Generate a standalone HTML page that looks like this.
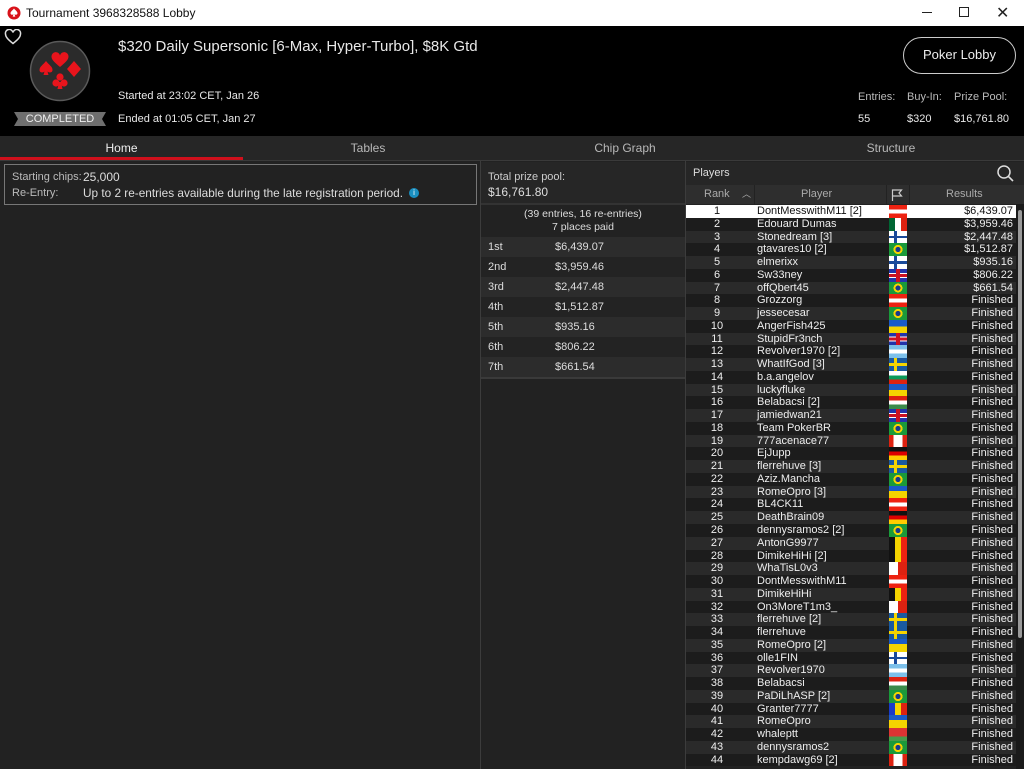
<!DOCTYPE html>
<html><head><meta charset="utf-8"><style>
*{margin:0;padding:0;box-sizing:border-box}
body{width:1024px;height:769px;overflow:hidden;background:#222;font-family:"Liberation Sans",sans-serif;position:relative;color:#ddd}
.abs{position:absolute}
#tb{left:0;top:0;width:1024px;height:26px;background:#fff;color:#111;font-size:12px}
#hdr{left:0;top:26px;width:1024px;height:110px;background:#000;color:#e8e8e8}
#tabs{left:0;top:136px;width:1024px;height:25px;background:#262626;border-bottom:1px solid #3a3a3a}
.tab{position:absolute;top:0;height:24px;line-height:24px;text-align:center;font-size:12px;color:#b8b8b8}
.row{position:absolute;left:686px;width:330px;height:12.76px;font-size:11px;line-height:12.76px;color:#eee}
.row span{position:absolute;top:0}
.r{left:0;width:62px;text-align:center}
.p{left:71px}
.res{right:3px;text-align:right}
.f{left:203px;width:18px;height:12.76px}
.pr{position:absolute;left:481px;width:204px;height:20px;font-size:11px;line-height:20px;color:#ddd}
.pr span{position:absolute}
</style></head><body>
<div id="tb" class="abs">
<svg class="abs" style="left:7px;top:6px" width="14" height="14" viewBox="0 0 14 14"><circle cx="7" cy="7" r="6.5" fill="#d8121a"/><path d="M7 2.5C5.5 4.5 3.5 5.5 3.5 7.3c0 1.4 1.7 2 3 1l-.8 2.3h2.6l-.8-2.3c1.3 1 3 .4 3-1C10.5 5.5 8.5 4.5 7 2.5z" fill="#fff"/></svg>
<div class="abs" style="left:26px;top:6px">Tournament 3968328588 Lobby</div>
<div class="abs" style="left:922px;top:12px;width:10px;height:1px;background:#222"></div>
<div class="abs" style="left:959px;top:7px;width:10px;height:10px;border:1px solid #222"></div>
<div class="abs" style="left:996px;top:3px;font-size:16px;color:#222">✕</div>
</div>
<div id="hdr" class="abs">
<svg class="abs" style="left:4px;top:3px" width="18" height="16" viewBox="0 0 18 16"><path d="M9 14.5C4 10.5 1.5 8 1.5 5A3.7 3.7 0 0 1 9 3.5 3.7 3.7 0 0 1 16.5 5c0 3-2.5 5.5-7.5 9.5z" fill="none" stroke="#ddd" stroke-width="1.5"/></svg>
<svg class="abs" style="left:29px;top:14px" width="62" height="62" viewBox="0 0 62 62"><circle cx="31" cy="31" r="29.5" fill="#2b2b2b" stroke="#5a5a5a" stroke-width="1.5"/>
<path d="M31 27C25 22 22.5 19.5 22.5 16.5a4.3 4.3 0 0 1 8.5-1 4.3 4.3 0 0 1 8.5 1c0 3-2.5 5.5-8.5 10.5z" fill="#e8141c"/>
<path d="M45 21l7 8-7 8-7-8z" fill="#e8141c"/>
<path d="M17 21c-3 4-6.5 5.5-6.5 9 0 2.5 3 3.3 5 1.5l-1 3.5h5l-1-3.5c2 1.8 5 1 5-1.5 0-3.5-3.5-5-6.5-9z" fill="#e8141c"/>
<circle cx="31" cy="37" r="3.6" fill="#e8141c"/><circle cx="27" cy="43" r="3.6" fill="#e8141c"/><circle cx="35" cy="43" r="3.6" fill="#e8141c"/><path d="M30 42h2l1.5 7h-5z" fill="#e8141c"/></svg>
<svg class="abs" style="left:14px;top:86px" width="92" height="14" viewBox="0 0 92 14"><path d="M0 0H92L88 7 92 14H0L4 7z" fill="#6f6f6f"/></svg>
<div class="abs" style="left:14px;top:87px;width:92px;text-align:center;font-size:11px;color:#eee;line-height:13px">COMPLETED</div>
<div class="abs" style="left:118px;top:12px;font-size:15px">$320 Daily Supersonic [6-Max, Hyper-Turbo], $8K Gtd</div>
<div class="abs" style="left:118px;top:64px;font-size:11px">Started at 23:02 CET, Jan 26</div>
<div class="abs" style="left:118px;top:87px;font-size:11px">Ended at 01:05 CET, Jan 27</div>
<div class="abs" style="left:903px;top:11px;width:113px;height:37px;border:1.5px solid #ccc;border-radius:19px;text-align:center;line-height:34px;font-size:13px;color:#eee">Poker Lobby</div>
<div class="abs" style="left:858px;top:65px;font-size:11px;color:#bbb">Entries:</div>
<div class="abs" style="left:907px;top:65px;font-size:11px;color:#bbb">Buy-In:</div>
<div class="abs" style="left:954px;top:65px;font-size:11px;color:#bbb">Prize Pool:</div>
<div class="abs" style="left:858px;top:87px;font-size:11px">55</div>
<div class="abs" style="left:907px;top:87px;font-size:11px">$320</div>
<div class="abs" style="left:954px;top:87px;font-size:11px">$16,761.80</div>
</div>
<div id="tabs" class="abs">
<div class="tab" style="left:0;width:243px;color:#eee">Home</div>
<div class="abs" style="left:0;top:21px;width:243px;height:3px;background:#d0101c"></div>
<div class="tab" style="left:243px;width:250px">Tables</div>
<div class="tab" style="left:500px;width:250px">Chip Graph</div>
<div class="tab" style="left:766px;width:250px">Structure</div>
</div>
<div class="abs" style="left:4px;top:164px;width:473px;height:41px;border:1px solid #777;font-size:11px">
<div class="abs" style="left:7px;top:6px;color:#bbb">Starting chips:</div><div class="abs" style="left:78px;top:5px;font-size:12px">25,000</div>
<div class="abs" style="left:7px;top:22px;color:#bbb">Re-Entry:</div><div class="abs" style="left:78px;top:21px;font-size:11.8px">Up to 2 re-entries available during the late registration period.</div>
<div class="abs" style="left:404px;top:23px;width:10px;height:10px;border-radius:50%;background:#1a8fc0;color:#fff;font-size:8px;line-height:10px;text-align:center">i</div>
</div>
<div class="abs" style="left:480px;top:161px;width:1px;height:608px;background:#3c3c3c"></div>
<div class="abs" style="left:685px;top:161px;width:1px;height:608px;background:#3c3c3c"></div>
<div class="abs" style="left:481px;top:162px;width:204px;height:43px;background:#262626;border-bottom:2px solid #333"></div>
<div class="abs" style="left:488px;top:171px;font-size:11px;color:#ccc">Total prize pool:</div>
<div class="abs" style="left:488px;top:185px;font-size:12px;color:#ddd">$16,761.80</div>
<div class="abs" style="left:481px;top:208px;width:204px;text-align:center;font-size:10.5px;line-height:13px;color:#ddd">(39 entries, 16 re-entries)<br>7 places paid</div>
<div class="pr" style="top:237px;background:#2c2c2c"><span style="left:7px">1st</span><span style="left:74px">$6,439.07</span></div>
<div class="pr" style="top:257px;background:#232323"><span style="left:7px">2nd</span><span style="left:74px">$3,959.46</span></div>
<div class="pr" style="top:277px;background:#2c2c2c"><span style="left:7px">3rd</span><span style="left:74px">$2,447.48</span></div>
<div class="pr" style="top:297px;background:#232323"><span style="left:7px">4th</span><span style="left:74px">$1,512.87</span></div>
<div class="pr" style="top:317px;background:#2c2c2c"><span style="left:7px">5th</span><span style="left:74px">$935.16</span></div>
<div class="pr" style="top:337px;background:#232323"><span style="left:7px">6th</span><span style="left:74px">$806.22</span></div>
<div class="pr" style="top:357px;background:#2c2c2c;border-bottom:2px solid #3a3a3a;height:22px"><span style="left:7px">7th</span><span style="left:74px">$661.54</span></div>
<div class="abs" style="left:686px;top:162px;width:338px;height:23px;background:#262626"></div>
<div class="abs" style="left:693px;top:167px;font-size:11px;color:#ddd">Players</div>
<svg class="abs" style="left:996px;top:164px" width="18" height="18" viewBox="0 0 18 18"><circle cx="8" cy="8" r="6" fill="none" stroke="#ddd" stroke-width="1.5"/><path d="M12.3 12.3L17 17" stroke="#ddd" stroke-width="1.6"/></svg>
<div class="abs" style="left:686px;top:185px;width:338px;height:19px;background:#2e2e2e;font-size:11px;color:#aaa;line-height:19px">
<span class="abs" style="left:18px">Rank</span><span class="abs" style="left:56px;font-size:9px">︿</span>
<div class="abs" style="left:68px;top:0;width:1px;height:19px;background:#222"></div>
<span class="abs" style="left:115px">Player</span>
<div class="abs" style="left:200px;top:0;width:1px;height:19px;background:#222"></div>
<svg class="abs" style="left:205px;top:4px" width="12" height="12" viewBox="0 0 12 12"><path d="M1.5 12V1h9L8 4l2.5 3h-9" fill="none" stroke="#ccc" stroke-width="1.2"/></svg>
<div class="abs" style="left:223px;top:0;width:1px;height:19px;background:#222"></div>
<span class="abs" style="left:260px">Results</span>
</div>
<div class="abs" style="left:1016px;top:204px;width:8px;height:565px;background:#1a1a1a"></div>
<div class="abs" style="left:1018px;top:210px;width:4px;height:428px;background:#9a9a9a;border-radius:2px"></div>
<div id="rows"></div>
<script>
const F={
AT:"linear-gradient(#e21 33%,#fff 33%,#fff 66%,#e21 66%)",
MX:"linear-gradient(90deg,#063 33%,#fff 33%,#fff 66%,#d21 66%)",
FI:"linear-gradient(90deg,transparent 28%,#1a4a9a 28%,#1a4a9a 44%,transparent 44%),linear-gradient(#fff 40%,#1a4a9a 40%,#1a4a9a 60%,#fff 60%)",
BR:"radial-gradient(circle,#1a3a8a 22%,#f5d400 24%,#f5d400 40%,#1a9a3a 42%)",
GB:"linear-gradient(90deg,transparent 40%,#c12 40%,#c12 60%,transparent 60%),linear-gradient(#23a 30%,#fff 30%,#fff 38%,#c12 38%,#c12 62%,#fff 62%,#fff 70%,#23a 70%)",
UA:"linear-gradient(#1a5ac8 50%,#f5d400 50%)",
AR:"linear-gradient(#7cc0ea 33%,#fff 33%,#fff 66%,#7cc0ea 66%)",
SE:"linear-gradient(90deg,transparent 28%,#f5d400 28%,#f5d400 44%,transparent 44%),linear-gradient(#1a5aa0 40%,#f5d400 40%,#f5d400 60%,#1a5aa0 60%)",
BG:"linear-gradient(#fff 33%,#0a9a5a 33%,#0a9a5a 66%,#d21 66%)",
HU:"linear-gradient(#d21 33%,#fff 33%,#fff 66%,#3a8a4a 66%)",
CA:"linear-gradient(90deg,#d21 25%,#fff 25%,#fff 75%,#d21 75%)",
DE:"linear-gradient(#111 33%,#d00 33%,#d00 66%,#fc0 66%)",
ES:"linear-gradient(#1a5ac8 40%,#f5d400 40%)",
BE:"linear-gradient(90deg,#111 33%,#f5d400 33%,#f5d400 66%,#e21 66%)",
MT:"linear-gradient(90deg,#fff 50%,#d21 50%)",
RO:"linear-gradient(90deg,#1a3ac8 33%,#f5d400 33%,#f5d400 66%,#d21 66%)",
BY:"linear-gradient(#d33 66%,#4a9a4a 66%)"};
const d=[
[1,"DontMesswithM11 [2]","AT","$6,439.07"],[2,"Edouard Dumas","MX","$3,959.46"],[3,"Stonedream [3]","FI","$2,447.48"],[4,"gtavares10 [2]","BR","$1,512.87"],[5,"elmerixx","FI","$935.16"],[6,"Sw33ney","GB","$806.22"],[7,"offQbert45","BR","$661.54"],[8,"Grozzorg","AT"],[9,"jessecesar","BR"],[10,"AngerFish425","UA"],[11,"StupidFr3nch","GB"],[12,"Revolver1970 [2]","AR"],[13,"WhatIfGod [3]","SE"],[14,"b.a.angelov","BG"],[15,"luckyfluke","UA"],[16,"Belabacsi [2]","HU"],[17,"jamiedwan21","GB"],[18,"Team PokerBR","BR"],[19,"777acenace77","CA"],[20,"EjJupp","DE"],[21,"flerrehuve [3]","SE"],[22,"Aziz.Mancha","BR"],[23,"RomeOpro [3]","ES"],[24,"BL4CK11","AT"],[25,"DeathBrain09","DE"],[26,"dennysramos2 [2]","BR"],[27,"AntonG9977","BE"],[28,"DimikeHiHi [2]","BE"],[29,"WhaTisL0v3","MT"],[30,"DontMesswithM11","AT"],[31,"DimikeHiHi","BE"],[32,"On3MoreT1m3_","MT"],[33,"flerrehuve [2]","SE"],[34,"flerrehuve","SE"],[35,"RomeOpro [2]","ES"],[36,"olle1FIN","FI"],[37,"Revolver1970","AR"],[38,"Belabacsi","HU"],[39,"PaDiLhASP [2]","BR"],[40,"Granter7777","RO"],[41,"RomeOpro","ES"],[42,"whaleptt","BY"],[43,"dennysramos2","BR"],[44,"kempdawg69 [2]","CA"]];
let h="";d.forEach((r,i)=>{const t=205+i*12.76;const bg=i==0?"#fff":(i%2?"#1c1c1c":"#2a2a2a");const c=i==0?"#111":"#eee";
h+=`<div class="row" style="top:${t}px;background:${bg};color:${c}"><span class="r">${r[0]}</span><span class="p">${r[1]}</span><span class="f" style="background:${F[r[2]]}"></span><span class="res">${r[3]||"Finished"}</span></div>`;});
document.getElementById("rows").innerHTML=h;
</script>
</body></html>
